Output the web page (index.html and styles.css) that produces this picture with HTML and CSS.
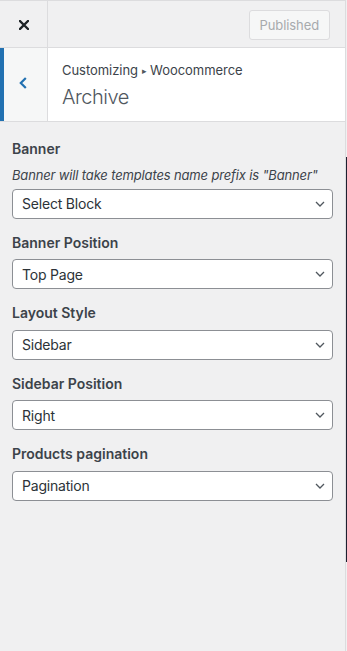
FILE: index.html
```html
<!DOCTYPE html>
<html lang="en">
<head>
<meta charset="utf-8">
<title>Customizing Archive</title>
<link rel="stylesheet" href="styles.css">
</head>
<body>
<div class="frame">
  <aside class="panel">
    <header class="topbar">
      <button class="close-btn" aria-label="Close">
        <svg width="10" height="10" viewBox="0 0 10 10"><path d="M1 1 L9 9 M9 1 L1 9" stroke="#1d2327" stroke-width="2.3" stroke-linecap="square"/></svg>
      </button>
      <div class="topbar-actions">
        <button class="publish-btn" disabled>Published</button>
      </div>
    </header>
    <div class="section-head">
      <button class="back-btn" aria-label="Back">
        <svg width="8" height="12" viewBox="0 0 8 12"><path d="M6.8 1 L1.8 6 L6.8 11" fill="none" stroke="#2271b1" stroke-width="2.2"/></svg>
      </button>
      <div class="section-title">
        <div class="crumb">Customizing <span class="tri">▸</span> Woocommerce</div>
        <h3 class="title">Archive</h3>
      </div>
    </div>
    <ul class="controls">
      <li class="control">
        <span class="control-title">Banner</span>
        <span class="control-desc">Banner will take templates name prefix is "Banner"</span>
        <div class="select"><span>Select Block</span><svg width="10" height="6" viewBox="0 0 10 6"><path d="M1 1 L5 5 L9 1" fill="none" stroke="#50575e" stroke-width="1.3"/></svg></div>
      </li>
      <li class="control">
        <span class="control-title">Banner Position</span>
        <div class="select"><span>Top Page</span><svg width="10" height="6" viewBox="0 0 10 6"><path d="M1 1 L5 5 L9 1" fill="none" stroke="#50575e" stroke-width="1.3"/></svg></div>
      </li>
      <li class="control">
        <span class="control-title">Layout Style</span>
        <div class="select"><span>Sidebar</span><svg width="10" height="6" viewBox="0 0 10 6"><path d="M1 1 L5 5 L9 1" fill="none" stroke="#50575e" stroke-width="1.3"/></svg></div>
      </li>
      <li class="control">
        <span class="control-title">Sidebar Position</span>
        <div class="select"><span>Right</span><svg width="10" height="6" viewBox="0 0 10 6"><path d="M1 1 L5 5 L9 1" fill="none" stroke="#50575e" stroke-width="1.3"/></svg></div>
      </li>
      <li class="control">
        <span class="control-title">Products pagination</span>
        <div class="select"><span>Pagination</span><svg width="10" height="6" viewBox="0 0 10 6"><path d="M1 1 L5 5 L9 1" fill="none" stroke="#50575e" stroke-width="1.3"/></svg></div>
      </li>
    </ul>
  </aside>
  <div class="preview">
    <div class="preview-edge"></div>
  </div>
</div>
</body>
</html>
```
FILE: styles.css
```css
* { box-sizing: border-box; }
html, body {
  margin: 0;
  padding: 0;
  height: 100%;
  background: #f0f0f1;
}
body {
  font-family: Inter, "Noto Sans", "Liberation Sans", sans-serif;
  color: #3c434a;
  overflow: hidden;
}
.frame {
  display: flex;
  height: 651px;
}
.panel {
  width: 346px;
  flex: none;
  background: #f0f0f1;
  border-right: 1px solid #dcdcde;
  display: flex;
  flex-direction: column;
}
.topbar {
  height: 48px;
  display: flex;
  border-top: 1px solid #dcdcde;
  border-bottom: 1px solid #dcdcde;
  background: #f0f0f1;
}
.close-btn {
  width: 48px;
  height: 46px;
  border: 0;
  border-right: 1px solid #dcdcde;
  background: transparent;
  padding: 0;
  display: flex;
  align-items: center;
  justify-content: center;
}
.close-btn svg { margin-top: 2px; }
.topbar-actions {
  flex: 1;
  display: flex;
  align-items: center;
  justify-content: flex-end;
  padding: 2px 15px 0 0;
}
.publish-btn {
  height: 30px;
  padding: 0 10px;
  font-family: inherit;
  font-size: 13px;
  letter-spacing: -0.1px;
  color: #a7aaad;
  background: #f6f7f7;
  border: 1px solid #dcdcde;
  border-radius: 3px;
}
.section-head {
  display: flex;
  height: 74px;
  background: #fff;
  border-bottom: 1px solid #dcdcde;
}
.back-btn {
  width: 48px;
  flex: none;
  border: 0;
  border-left: 4px solid #2271b1;
  border-right: 1px solid #dcdcde;
  background: #f6f7f7;
  padding: 0;
  display: flex;
  align-items: center;
  justify-content: center;
}
.back-btn svg { margin: -4px 5px 0 0; }
.section-title {
  padding: 10px 0 0 14px;
}
.crumb {
  font-size: 13px;
  line-height: 24px;
  letter-spacing: -0.05px;
  color: #3c434a;
}
.tri { font-size: 9px; color: #50575e; position: relative; top: -1px; }
.title {
  margin: 0;
  font-size: 20px;
  font-weight: 300;
  line-height: 26px;
  letter-spacing: -0.5px;
  color: #50575e;
}
.controls {
  list-style: none;
  margin: 0;
  padding: 15px 12px 0 12px;
  display: flex;
  flex-direction: column;
  gap: 12px;
}
.control {
  display: flex;
  flex-direction: column;
}
.control-title {
  font-size: 14px;
  font-weight: 600;
  line-height: 1.75;
  margin-bottom: 4px;
  color: #3c434a;
}
.control-desc {
  font-size: 13px;
  font-style: italic;
  line-height: 18px;
  letter-spacing: -0.15px;
  margin: 0 0 5px 0;
  color: #3c434a;
}
.select {
  height: 30px;
  background: #fff;
  border: 1px solid #8c8f94;
  border-radius: 4px;
  display: flex;
  align-items: center;
  justify-content: space-between;
  padding: 0 6px 0 9px;
  font-size: 14px;
  letter-spacing: -0.2px;
  color: #2c3338;
}
.select svg { margin-right: 1px; }
.preview {
  flex: 1;
  position: relative;
  background: #f0f0f1;
}
.preview-edge {
  position: absolute;
  left: 0;
  top: 157px;
  width: 1px;
  height: 405px;
  background: #1d2030;
}
```
